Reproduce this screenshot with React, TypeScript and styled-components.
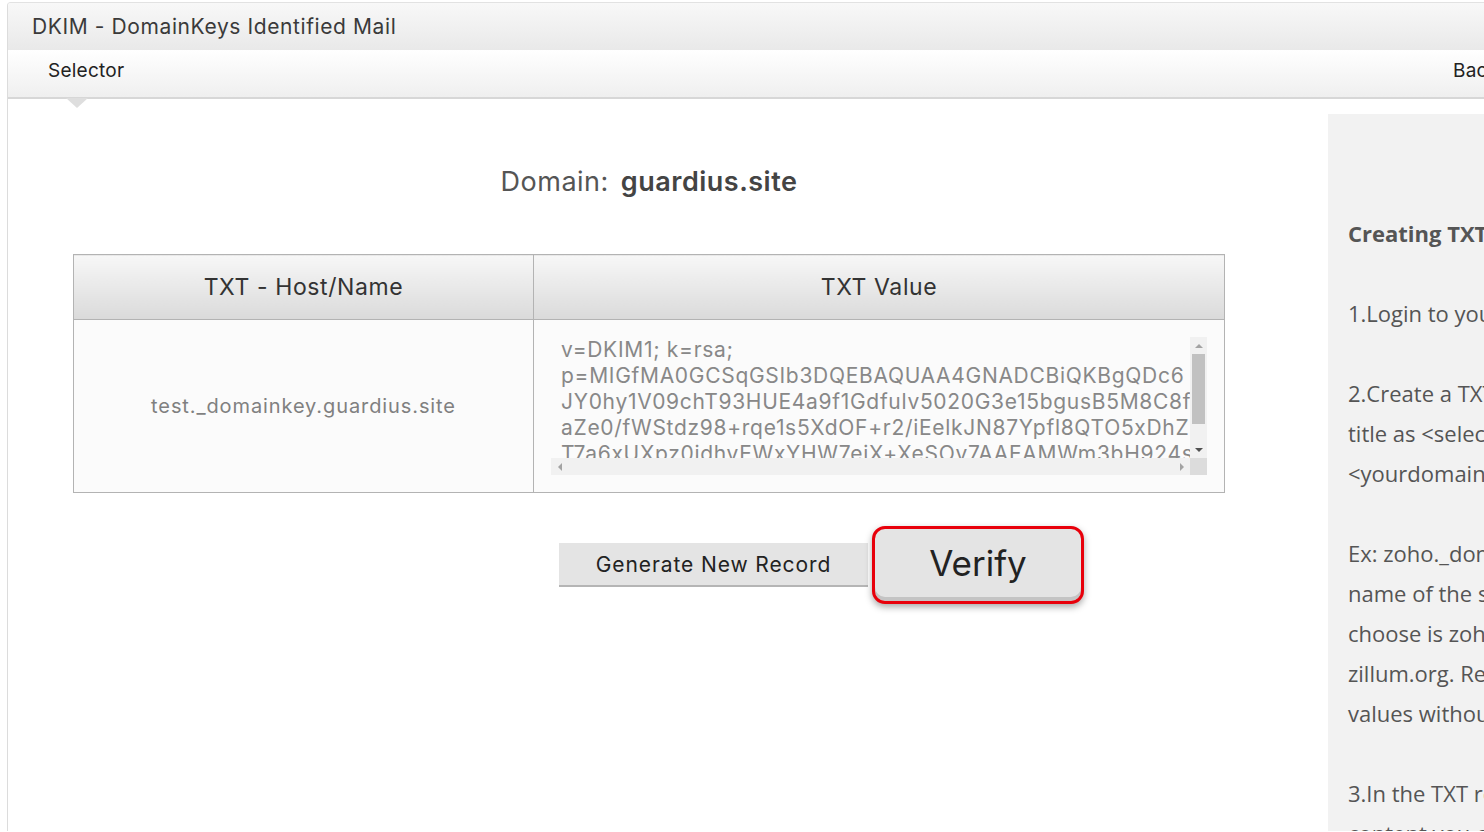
import React from "react";
import styled, { createGlobalStyle } from "styled-components";

const GlobalStyle = createGlobalStyle`
  html, body {
    margin: 0;
    padding: 0;
    overflow: hidden;
    background: #fff;
  }
  body {
    font-family: "Inter", "Liberation Sans", sans-serif;
  }
`;

const Page = styled.div`
  padding: 2px 0 0 7px;
  width: 1700px;
  height: 830px;
`;

const Card = styled.div`
  width: 1665px;
  height: 828px;
  border-left: 1px solid #dcdcdc;
  border-top: 1px solid #e2e2e2;
  border-radius: 4px 0 0 0;
  overflow: hidden;
  display: flex;
  flex-direction: column;
`;

const Header = styled.div`
  flex-shrink: 0;
  height: 47px;
  display: flex;
  align-items: center;
  padding-left: 24px;
  background: linear-gradient(#f8f8f8, #e9e9e9);
  font-size: 21px;
  letter-spacing: 0.6px;
  color: #3a3a3a;
`;

const TabBar = styled.div`
  flex-shrink: 0;
  height: 49px;
  box-sizing: border-box;
  padding-bottom: 7px;
  display: grid;
  grid-template-columns: 1fr 220px;
  align-items: center;
  background: linear-gradient(#ffffff, #efefef);
  border-bottom: 2px solid #d7d7d7;
`;

const Tab = styled.div<{ $active?: boolean }>`
  position: relative;
  font-size: 19px;
  letter-spacing: 0.25px;
  color: #222;
  padding-left: ${(p) => (p.$active ? "40px" : "0")};
  justify-self: start;

  ${(p) =>
    p.$active &&
    `
    &::after {
      content: "";
      position: absolute;
      left: 58px;
      top: 39px;
      border-left: 11px solid transparent;
      border-right: 11px solid transparent;
      border-top: 10px solid #dedede;
    }
  `}
`;

const Body = styled.div`
  flex: 1;
  display: flex;
  gap: 38px;
`;

const Main = styled.div`
  width: 1282px;
  flex-shrink: 0;
  padding: 66px 65px 0;
  box-sizing: border-box;
  display: flex;
  flex-direction: column;
`;

const DomainTitle = styled.div`
  text-align: center;
  font-size: 27px;
  letter-spacing: 0.5px;
  line-height: 34px;
  color: #555;
  margin-bottom: 55px;

  b {
    font-weight: 600;
    color: #444;
    margin-left: 12px;
  }
`;

const RecordTable = styled.table`
  width: 100%;
  border-collapse: collapse;
  border: 1px solid #b3b3b3;
`;

const HeadCell = styled.th`
  height: 64px;
  padding: 0;
  border: 1px solid #b3b3b3;
  background: linear-gradient(#f7f7f7, #dadada);
  font-size: 23px;
  letter-spacing: 0.6px;
  font-weight: 400;
  color: #333;
  text-align: center;

  &:first-child {
    width: 459px;
  }
`;

const Cell = styled.td`
  height: 173px;
  padding: 17px;
  box-sizing: border-box;
  border: 1px solid #b3b3b3;
  background: #fbfbfb;
  text-align: center;
  vertical-align: middle;
  font-size: 20px;
  letter-spacing: 0.9px;
  color: #808080;
`;

const ValueFrame = styled.div`
  display: grid;
  grid-template-columns: 1fr 17px;
  grid-template-rows: 1fr 17px;
  width: 656px;
  height: 138px;
  background: #fbfbfb;
`;

const ValueText = styled.textarea`
  display: block;
  width: 100%;
  height: 100%;
  margin: 0;
  padding: 0 0 0 10px;
  box-sizing: border-box;
  border: none;
  outline: none;
  resize: none;
  background: #fbfbfb;
  font-family: "Inter", "Liberation Sans", sans-serif;
  font-size: 21px;
  letter-spacing: 0.7px;
  line-height: 26px;
  color: #888;
  white-space: pre;
  overflow: hidden;
`;

const ScrollRail = styled.div<{ $horizontal?: boolean }>`
  display: flex;
  flex-direction: ${(p) => (p.$horizontal ? "row" : "column")};
  background: #f1f1f1;
`;

const ScrollThumb = styled.div`
  margin: 0 2px;
  height: 70px;
  background: #c1c1c1;
`;

const ScrollSpacer = styled.div`
  flex: 1;
`;

type Dir = "up" | "down" | "left" | "right";

const ScrollArrow = styled.div<{ $dir: Dir; $dark?: boolean }>`
  flex-shrink: 0;
  width: 17px;
  height: 17px;
  display: flex;
  align-items: center;
  justify-content: center;

  &::before {
    content: "";
    width: 0;
    height: 0;
    ${(p) => {
      const c = p.$dark ? "#505050" : "#a3a3a3";
      if (p.$dir === "up")
        return `border-left: 4px solid transparent; border-right: 4px solid transparent; border-bottom: 4px solid ${c};`;
      if (p.$dir === "down")
        return `border-left: 4px solid transparent; border-right: 4px solid transparent; border-top: 4px solid ${c};`;
      if (p.$dir === "left")
        return `border-top: 4px solid transparent; border-bottom: 4px solid transparent; border-right: 4px solid ${c};`;
      return `border-top: 4px solid transparent; border-bottom: 4px solid transparent; border-left: 4px solid ${c};`;
    }}
  }
`;

const ScrollCorner = styled.div`
  background: #dcdcdc;
`;

const ButtonRow = styled.div`
  display: flex;
  align-items: center;
  gap: 4px;
  margin-top: 33px;
  padding-left: 486px;
`;

const GenerateButton = styled.button`
  width: 309px;
  height: 44px;
  border: none;
  border-bottom: 2px solid #b5b5b5;
  background: #e4e4e4;
  font-family: "Inter", "Liberation Sans", sans-serif;
  font-size: 21px;
  letter-spacing: 0.9px;
  color: #222;
  padding: 0;
`;

const VerifyButton = styled.button`
  width: 212px;
  height: 78px;
  border: 3px solid #e8000b;
  border-radius: 13px;
  background: #e4e4e4;
  box-shadow: inset 0 -4px 0 #c4c4c4, 0 3px 7px rgba(0, 0, 0, 0.35);
  font-family: "Inter", "Liberation Sans", sans-serif;
  font-size: 35px;
  color: #222;
  padding: 0 0 4px;
`;

const Sidebar = styled.div`
  flex: 1;
  margin-top: 15px;
  background: #f2f2f2;
  padding: 99px 20px 0;
  font-family: "Open Sans", "Liberation Sans", sans-serif;
  font-size: 22px;
  line-height: 40px;
  color: #555;
  white-space: nowrap;
`;

const Para = styled.p<{ $bold?: boolean }>`
  margin: 0 0 40px;
  font-weight: ${(p) => (p.$bold ? 700 : 400)};
`;

const dkimValue = [
  "v=DKIM1; k=rsa;",
  "p=MIGfMA0GCSqGSIb3DQEBAQUAA4GNADCBiQKBgQDc6",
  "JY0hy1V09chT93HUE4a9f1Gdfulv5020G3e15bgusB5M8C8f",
  "aZe0/fWStdz98+rqe1s5XdOF+r2/iEelkJN87Ypfl8QTO5xDhZ",
  "T7a6xUXpz0idhyEWxYHW7ejX+XeSOv7AAEAMWm3bH924sUwQx",
  "kQ2mZrP8vLwYt1cHn4sD0gB7uRqIDAQAB",
].join("\n");

const App: React.FC = () => {
  return (
    <>
      <GlobalStyle />
      <Page>
        <Card>
          <Header>DKIM - DomainKeys Identified Mail</Header>
          <TabBar>
            <Tab $active>Selector</Tab>
            <Tab>Back to Domains</Tab>
          </TabBar>
          <Body>
            <Main>
              <DomainTitle>
                Domain:<b>guardius.site</b>
              </DomainTitle>
              <RecordTable>
                <thead>
                  <tr>
                    <HeadCell>TXT - Host/Name</HeadCell>
                    <HeadCell>TXT Value</HeadCell>
                  </tr>
                </thead>
                <tbody>
                  <tr>
                    <Cell>test._domainkey.guardius.site</Cell>
                    <Cell>
                      <ValueFrame>
                        <ValueText readOnly wrap="off" value={dkimValue} />
                        <ScrollRail>
                          <ScrollArrow $dir="up" />
                          <ScrollThumb />
                          <ScrollSpacer />
                          <ScrollArrow $dir="down" $dark />
                        </ScrollRail>
                        <ScrollRail $horizontal>
                          <ScrollArrow $dir="left" />
                          <ScrollSpacer />
                          <ScrollArrow $dir="right" />
                        </ScrollRail>
                        <ScrollCorner />
                      </ValueFrame>
                    </Cell>
                  </tr>
                </tbody>
              </RecordTable>
              <ButtonRow>
                <GenerateButton>Generate New Record</GenerateButton>
                <VerifyButton>Verify</VerifyButton>
              </ButtonRow>
            </Main>
            <Sidebar>
              <Para $bold>Creating TXT Record</Para>
              <Para>1.Login to your DNS manager.</Para>
              <Para>
                2.Create a TXT record with the
                <br />
                title as &lt;selector&gt;._domainkey.
                <br />
                &lt;yourdomain&gt;
              </Para>
              <Para>
                Ex: zoho._domainkey.zillum.org if the
                <br />
                name of the selector you
                <br />
                choose is zoho and your domain is
                <br />
                zillum.org. Refer to your DNS provider for
                <br />
                values without domain.
              </Para>
              <Para>
                3.In the TXT record value, paste the
                <br />
                content you copied from the TXT Value.
              </Para>
            </Sidebar>
          </Body>
        </Card>
      </Page>
    </>
  );
};

export default App;
